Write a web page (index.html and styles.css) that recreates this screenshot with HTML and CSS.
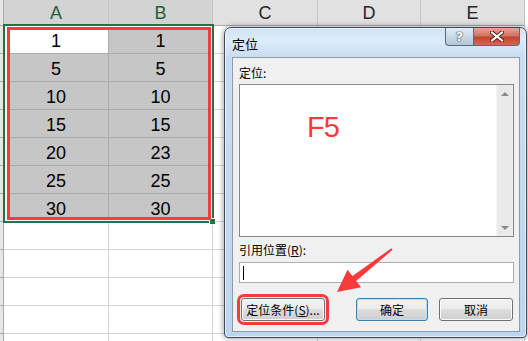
FILE: index.html
```html
<!DOCTYPE html>
<html lang="zh-CN">
<head>
    <meta charset="UTF-8">
    <meta name="viewport" content="width=device-width, initial-scale=1.0">
    <title>定位</title>
    <link rel="stylesheet" href="styles.css">
</head>
<body>
    <div class="sheet">
        <div class="row head">
            <div class="rh"></div>
            <div class="ch sel">A</div>
            <div class="ch sel">B</div>
            <div class="ch">C</div>
            <div class="ch">D</div>
            <div class="ch">E</div>
        </div>
        <div class="row"><div class="rh"></div><div class="cell active">1</div><div class="cell sel">1</div><div class="cell"></div><div class="cell"></div><div class="cell"></div></div>
        <div class="row"><div class="rh"></div><div class="cell sel">5</div><div class="cell sel">5</div><div class="cell"></div><div class="cell"></div><div class="cell"></div></div>
        <div class="row"><div class="rh"></div><div class="cell sel">10</div><div class="cell sel">10</div><div class="cell"></div><div class="cell"></div><div class="cell"></div></div>
        <div class="row"><div class="rh"></div><div class="cell sel">15</div><div class="cell sel">15</div><div class="cell"></div><div class="cell"></div><div class="cell"></div></div>
        <div class="row"><div class="rh"></div><div class="cell sel">20</div><div class="cell sel">23</div><div class="cell"></div><div class="cell"></div><div class="cell"></div></div>
        <div class="row"><div class="rh"></div><div class="cell sel">25</div><div class="cell sel">25</div><div class="cell"></div><div class="cell"></div><div class="cell"></div></div>
        <div class="row"><div class="rh"></div><div class="cell sel">30</div><div class="cell sel">30</div><div class="cell"></div><div class="cell"></div><div class="cell"></div></div>
        <div class="row"><div class="rh"></div><div class="cell"></div><div class="cell"></div><div class="cell"></div><div class="cell"></div><div class="cell"></div></div>
        <div class="row"><div class="rh"></div><div class="cell"></div><div class="cell"></div><div class="cell"></div><div class="cell"></div><div class="cell"></div></div>
        <div class="row"><div class="rh"></div><div class="cell"></div><div class="cell"></div><div class="cell"></div><div class="cell"></div><div class="cell"></div></div>
        <div class="row"><div class="rh"></div><div class="cell"></div><div class="cell"></div><div class="cell"></div><div class="cell"></div><div class="cell"></div></div>
        <div class="row"><div class="rh"></div><div class="cell"></div><div class="cell"></div><div class="cell"></div><div class="cell"></div><div class="cell"></div></div>

        <!-- seleccion + marca roja -->
        <div class="selection"><span class="handle"></span></div>
        <div class="mark"></div>
    </div>

    <div class="dialog">
        <div class="titlebar">
            <span class="title">定位</span>
            <div class="caption-btns">
                <span class="cap-help">?</span>
                <span class="cap-close">
                    <svg width="14" height="11" viewBox="0 0 14 11">
                        <path d="M2 1.5 L12 9.5 M12 1.5 L2 9.5" stroke="#4a2420" stroke-width="4" stroke-linecap="square"/>
                        <path d="M2 1.5 L12 9.5 M12 1.5 L2 9.5" stroke="#fff" stroke-width="2" stroke-linecap="square"/>
                    </svg>
                </span>
            </div>
        </div>
        <div class="panel">
            <div class="lbl">定位:</div>
            <div class="listbox">
                <div class="list-area"><span class="hint">F5</span></div>
                <div class="vscroll">
                    <span class="arr up"></span>
                    <span class="arr down"></span>
                </div>
            </div>
            <div class="lbl lbl2">引用位置(<u>R</u>):</div>
            <div class="ref-input"><span class="caret"></span></div>
            <div class="btn-row">
                <span class="btn special">定位条件(<u>S</u>)...</span>
                <span class="btn default">确定</span>
                <span class="btn cancel">取消</span>
            </div>
        </div>
    </div>

    <svg class="arrow" width="528" height="341" viewBox="0 0 528 341">
        <polygon points="337,292 347.5,269.8 352.5,276.1 391.4,248.2 392.6,249.8 356.1,280.9 361.1,287.2" fill="#f83a3a"/>
    </svg>
</body>
</html>
```

FILE: styles.css
```css
body {
    margin: 0;
    width: 528px;
    height: 341px;
    overflow: hidden;
    position: relative;
    background: #fff;
    font-family: "Liberation Sans", Arial, sans-serif;
    color: #000;
}

/* hoja de calculo */
.sheet {
    position: relative;
    height: 341px;
    overflow: hidden;
}
.row {
    display: grid;
    grid-template-columns: 4px 105px 104px 105px 103px 104px;
    height: 28px;
}
.row.head {
    height: 26px;
}
.rh {
    background: #e6e6e6;
    border-right: 1px solid #ababab;
    border-bottom: 1px solid #ababab;
}
.ch {
    background: #e1e1e1;
    border-right: 1px solid #c4c4c4;
    border-bottom: 1px solid #ababab;
    display: flex;
    align-items: flex-end;
    justify-content: center;
    padding-bottom: 1px;
    font-size: 18px;
    color: #262626;
}
.ch.sel {
    background: #d3d3d3;
    color: #1f5f3e;
}
.cell {
    border-right: 1px solid #d4d4d4;
    border-bottom: 1px solid #d4d4d4;
    display: flex;
    align-items: flex-end;
    justify-content: center;
    padding-bottom: 1px;
    font-size: 18px;
    line-height: normal;
    overflow: hidden;
}
.cell.sel {
    background: #c6c6c6;
    border-color: #ababab;
}
.cell.active {
    background: #fff;
    border-color: #ababab;
}

.selection {
    position: absolute;
    left: 3px;
    top: 24px;
    width: 211px;
    height: 199px;
    box-sizing: border-box;
    border: 2px solid #217346;
    box-shadow: inset 0 0 0 2px #fff;
}
.handle {
    position: absolute;
    right: -4px;
    bottom: -4px;
    width: 5px;
    height: 5px;
    background: #217346;
    border: 1px solid #fff;
}
.mark {
    position: absolute;
    left: 7px;
    top: 27px;
    width: 204px;
    height: 193px;
    box-sizing: border-box;
    border: 3px solid #f83a3a;
}

/* ventana de dialogo */
.dialog {
    position: absolute;
    left: 224px;
    top: 27px;
    width: 303px;
    height: 311px;
    box-sizing: border-box;
    border: 1px solid #3e4a59;
    border-radius: 7px 7px 4px 4px;
    background: linear-gradient(#cfe2f5, #dcebf9 12px, #c9ddf2 29px, #bdd5ee);
    box-shadow: 0 0 6px rgba(0, 0, 0, 0.45), inset 0 0 0 1px rgba(255, 255, 255, 0.6);
    padding: 0 6px 5px 7px;
    display: flex;
    flex-direction: column;
}
.titlebar {
    height: 29px;
    display: flex;
    align-items: center;
}
.title {
    flex: 1;
    font-family: "Noto Sans CJK SC", sans-serif;
    font-size: 13px;
    padding-top: 1px;
}
.caption-btns {
    align-self: flex-start;
    display: flex;
}
.cap-help,
.cap-close {
    height: 18px;
    box-sizing: border-box;
    border: 1px solid #5d6977;
    border-top: none;
    display: flex;
    align-items: center;
    justify-content: center;
}
.cap-help {
    width: 28px;
    border-radius: 0 0 0 4px;
    border-right: none;
    background: linear-gradient(#e3ecf6, #c9d7e7 50%, #b3c5d9);
    color: #fff;
    font-family: "DejaVu Sans", sans-serif;
    font-weight: bold;
    font-size: 13px;
    text-shadow: 0 0 1px #34404e, 0 0 1px #34404e, 0 0 1px #34404e;
}
.cap-close {
    width: 47px;
    border-radius: 0 0 4px 0;
    background: linear-gradient(#e8a497, #d3725f 45%, #c2432f 55%, #d46a52);
}

.panel {
    flex: 1;
    background: #f0f0f0;
    border: 1px solid #8e9aa8;
    padding: 7px 5px 0 6px;
    font-family: "Noto Sans CJK SC", sans-serif;
    font-size: 12px;
}
.lbl {
    height: 16px;
    line-height: 16px;
}
.lbl2 {
    margin-top: 5px;
}
.listbox {
    margin-top: 3px;
    height: 153px;
    box-sizing: border-box;
    border: 1px solid #828790;
    background: #fff;
    display: flex;
}
.list-area {
    flex: 1;
    padding: 26px 0 0 67px;
}
.hint {
    font-family: "Liberation Sans", Arial, sans-serif;
    font-size: 29px;
    letter-spacing: -1px;
    color: #f83a3a;
}
.vscroll {
    width: 16px;
    background: #eaeaea;
    border-left: 1px solid #f4f4f4;
    display: flex;
    flex-direction: column;
    justify-content: space-between;
    align-items: center;
    padding: 7px 0 6px;
}
.arr {
    width: 0;
    height: 0;
    border-left: 4px solid transparent;
    border-right: 4px solid transparent;
}
.arr.up {
    border-bottom: 4px solid #8a8a8a;
}
.arr.down {
    border-top: 4px solid #8a8a8a;
}
.ref-input {
    margin-top: 4px;
    height: 21px;
    box-sizing: border-box;
    border: 1px solid #abadb3;
    background: #fff;
    padding: 3px 0 0 3px;
}
.caret {
    display: block;
    width: 1px;
    height: 14px;
    background: #000;
}
.btn-row {
    margin-top: 15px;
    display: flex;
    padding-left: 2px;
}
.btn {
    height: 23px;
    box-sizing: border-box;
    border: 1px solid #707070;
    border-radius: 3px;
    background: linear-gradient(#f2f2f2, #ebebeb 50%, #dddddd 50%, #cfcfcf);
    box-shadow: inset 0 0 0 1px #fbfbfb;
    display: flex;
    align-items: center;
    justify-content: center;
}
.btn.special {
    width: 84px;
    outline: 3px solid #f83a3a;
    outline-offset: 1px;
}
.btn.default {
    width: 72px;
    margin-left: 31px;
    border-color: #3c7fb1;
    box-shadow: inset 0 0 0 1px #b8e0f6;
}
.btn.cancel {
    width: 74px;
    margin-left: 11px;
}

.arrow {
    position: absolute;
    left: 0;
    top: 0;
    pointer-events: none;
}
```
